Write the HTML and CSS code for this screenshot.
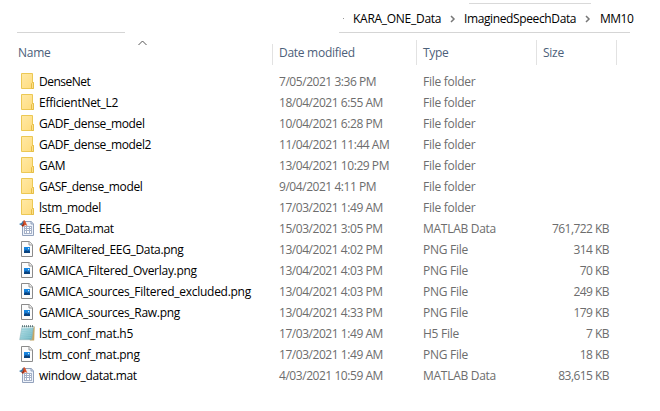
FILE: index.html
```html
<!DOCTYPE html>
<html lang="en">
<head>
<meta charset="utf-8">
<title>MM10</title>
<link rel="stylesheet" href="styles.css">
</head>
<body>
<svg class="defs" width="0" height="0" aria-hidden="true">
  <defs>
    <linearGradient id="fold" x1="0" y1="0" x2="1" y2="1"><stop offset="0" stop-color="#ffe9a6"/><stop offset="1" stop-color="#ffdc7c"/></linearGradient>
    <linearGradient id="pad" x1="0" y1="0" x2="1" y2="1"><stop offset="0" stop-color="#c4e7ee"/><stop offset="1" stop-color="#62aebb"/></linearGradient>
    <linearGradient id="sky" x1="0" y1="0" x2="0" y2="1"><stop offset="0" stop-color="#168be8"/><stop offset="1" stop-color="#1764b4"/></linearGradient>
    <symbol id="folder" viewBox="0 0 16 16">
      <path d="M2.500.5h11v9h.9v6H2.500z" fill="url(#fold)" stroke="#ecc854"/>
      <path d="M12.500 15.500V10.500l1-1h.9v6z" fill="#ffe494" stroke="#e5bd45"/>
    </symbol>
    <symbol id="png" viewBox="0 0 16 16">
      <path d="M2.500.5h7.800l3.200 3.200v11.800h-11z" fill="#fcfcfc" stroke="#8b8b8b"/>
      <path d="M10 .5v3.500h3.500" fill="#eee" stroke="#999"/>
      <path d="M5 6h6v6H5z" fill="url(#sky)"/>
      <path d="M5 10.500l2-1.500 1.500 1 1-.7L11 10.500V12H5z" fill="#0b437e"/>
      <path d="M9 7h1.200v1.200H9z" fill="#c8edff"/>
    </symbol>
    <symbol id="mat" viewBox="0 0 16 16">
      <path d="M3.500 1.500h8.700l2.300 2.300v11.700h-11z" fill="#edf2fa" stroke="#93a2bc"/>
      <path d="M12 1.500v2.500h2.500" fill="#cbd6e8" stroke="#93a2bc"/>
      <path d="M5 6h8v8H5z" fill="#a5b1c8"/>
      <path d="M6 7h1v1H6zM8 7h2v1H8zM11 7h1v1h-1zM6 9h1v1H6zM8 9h2v1H8zM11 9h1v1h-1zM6 11h1v2H6zM8 11h2v2H8zM11 11h1v2h-1z" fill="#fff"/>
      <path d="M0 4l2.300-1L5 .2 3.400 5.600 2 5.200z" fill="#397baa"/>
      <path d="M4.900 0C6.500.2 7 3.500 8.500 6L6.200 5 3.800 7 2.300 5.200 3.800 4z" fill="#d95126"/>
      <path d="M4.700.5L4.500 4 2.700 5.500l1.200.9 1.300-2.500z" fill="#772b28"/>
    </symbol>
    <symbol id="note" viewBox="0 0 16 16">
      <path d="M4 1.500h11.700L15.200 15.500H11z" fill="#c4a562"/>
      <path d="M3 1.500h11.500L12.700 14.700H.7z" fill="url(#pad)" stroke="#8fb6bb" stroke-width=".6"/>
      <path d="M2.800 4.500h10.500M2.500 6.500h10.500M2.200 8.500h10.500M1.900 10.500h10.500M1.600 12.500h10.500" stroke="#8fcbd4" stroke-width=".6"/>
      <path d="M2.500 2.200h12" stroke="#e8f2f2" stroke-width="1"/>
      <path d="M3.500.2v2M5.500.2v2M7.500.2v2M9.500.2v2M11.500.2v2M13.500.2v2" stroke="#536b70" stroke-width=".9"/>
    </symbol>
  </defs>
</svg>
<div class="window">
  <nav class="path">
    <i class="dot"></i>
    <span class="crumb kara">KARA_ONE_Data</span>
    <svg class="chev" viewBox="0 0 6 8"><path d="M1 1l3 3-3 3"/></svg>
    <span class="crumb speech">ImaginedSpeechData</span>
    <svg class="chev" viewBox="0 0 6 8"><path d="M1 1l3 3-3 3"/></svg>
    <span class="crumb current">MM10</span>
    <i class="topline"></i>
  </nav>
  <div class="rules"><i class="left"></i><i class="right"></i></div>
  <header class="row head">
    <span class="name">Name</span><span class="date">Date modified</span><span class="type">Type</span><span class="size">Size</span>
    <svg class="sort" viewBox="0 0 9 6"><path d="M.5 5l4-4 4 4"/></svg>
  </header>
  <main>
    <div class="row"><svg class="icon"><use href="#folder"/></svg><span class="name tight">DenseNet</span><span class="date">7/05/2021 3:36 PM</span><span class="type">File folder</span><span class="size"></span></div>
    <div class="row"><svg class="icon"><use href="#folder"/></svg><span class="name">EfficientNet_L2</span><span class="date">18/04/2021 6:55 AM</span><span class="type">File folder</span><span class="size"></span></div>
    <div class="row"><svg class="icon"><use href="#folder"/></svg><span class="name snug">GADF_dense_model</span><span class="date">10/04/2021 6:28 PM</span><span class="type">File folder</span><span class="size"></span></div>
    <div class="row"><svg class="icon"><use href="#folder"/></svg><span class="name snug">GADF_dense_model2</span><span class="date">11/04/2021 11:44 AM</span><span class="type">File folder</span><span class="size"></span></div>
    <div class="row"><svg class="icon"><use href="#folder"/></svg><span class="name">GAM</span><span class="date">13/04/2021 10:29 PM</span><span class="type">File folder</span><span class="size"></span></div>
    <div class="row"><svg class="icon"><use href="#folder"/></svg><span class="name snug">GASF_dense_model</span><span class="date">9/04/2021 4:11 PM</span><span class="type">File folder</span><span class="size"></span></div>
    <div class="row"><svg class="icon"><use href="#folder"/></svg><span class="name">lstm_model</span><span class="date">17/03/2021 1:49 AM</span><span class="type">File folder</span><span class="size"></span></div>
    <div class="row"><svg class="icon"><use href="#mat"/></svg><span class="name snug">EEG_Data.mat</span><span class="date">15/03/2021 3:05 PM</span><span class="type">MATLAB Data</span><span class="size">761,722 KB</span></div>
    <div class="row"><svg class="icon"><use href="#png"/></svg><span class="name snug">GAMFiltered_EEG_Data.png</span><span class="date">13/04/2021 4:02 PM</span><span class="type">PNG File</span><span class="size">314 KB</span></div>
    <div class="row"><svg class="icon"><use href="#png"/></svg><span class="name">GAMICA_Filtered_Overlay.png</span><span class="date">13/04/2021 4:03 PM</span><span class="type">PNG File</span><span class="size">70 KB</span></div>
    <div class="row"><svg class="icon"><use href="#png"/></svg><span class="name">GAMICA_sources_Filtered_excluded.png</span><span class="date">13/04/2021 4:03 PM</span><span class="type">PNG File</span><span class="size">249 KB</span></div>
    <div class="row"><svg class="icon"><use href="#png"/></svg><span class="name">GAMICA_sources_Raw.png</span><span class="date">13/04/2021 4:33 PM</span><span class="type">PNG File</span><span class="size">179 KB</span></div>
    <div class="row"><svg class="icon"><use href="#note"/></svg><span class="name">lstm_conf_mat.h5</span><span class="date">17/03/2021 1:49 AM</span><span class="type">H5 File</span><span class="size">7 KB</span></div>
    <div class="row"><svg class="icon"><use href="#png"/></svg><span class="name">lstm_conf_mat.png</span><span class="date">17/03/2021 1:49 AM</span><span class="type">PNG File</span><span class="size">18 KB</span></div>
    <div class="row"><svg class="icon"><use href="#mat"/></svg><span class="name snug">window_datat.mat</span><span class="date">4/03/2021 10:59 AM</span><span class="type">MATLAB Data</span><span class="size">83,615 KB</span></div>
  </main>
</div>
</body>
</html>
```
FILE: styles.css
```css
* { box-sizing: border-box; }
body { margin: 0; background: #fff; font-family: "Open Sans", "Noto Sans", sans-serif; font-size: 12px; line-height: 21px; color: #000; white-space: nowrap; }
.defs { position: absolute; }
.window { width: 660px; height: 411px; overflow: hidden; }
.path { position: relative; height: 32px; padding: 5px 0 0 343px; display: flex; align-items: center; }
.dot { width: 1px; height: 1px; background: #999; }
.crumb { flex: none; letter-spacing: -.28px; }
.kara { margin-left: 9px; width: 97px; }
.speech { margin-left: 8px; width: 121px; letter-spacing: -.38px; }
.current { margin-left: 9px; letter-spacing: -.5px; }
.chev { width: 6px; height: 8px; fill: none; stroke: #777; stroke-width: 1.5; flex: none; }
.topline { position: absolute; left: 469px; top: 3px; width: 122px; height: 1px; background: #d9d9d9; }
.rules { display: flex; justify-content: space-between; height: 1px; padding: 0 30px 0 17px; }
.rules i { background: #d5d5d5; height: 1px; }
.left { width: 108px; }
.right { width: 291px; }
.row { display: grid; grid-template-columns: 20px 240px 144px 120px 66px; height: 21px; padding-left: 19px; color: #6d6d6d; letter-spacing: -.28px; }
.icon { width: 16px; height: 16px; margin-top: 2px; }
.row .name { color: #000; }
.name.snug { letter-spacing: -.34px; }
.name.tight { letter-spacing: -.5px; }
main .date { letter-spacing: -.45px; }
main .size { text-align: right; letter-spacing: -.55px; }
.head { position: relative; height: 38px; padding-left: 18px; grid-template-columns: 255px 144px 120px 80px; line-height: 40px; color: #4c607a; }
.row.head .name { color: #4c607a; }
.head span { position: relative; }
.head .date, .head .type, .head .size { padding-left: 6px; }
.head span::after { content: ""; position: absolute; right: 0; top: 7px; width: 1px; height: 25px; background: #e2e2e2; }
.head .name::after { top: 11px; height: 21px; }
.sort { position: absolute; left: 138px; top: 7px; width: 9px; height: 6px; fill: none; stroke: #555; stroke-width: 1; }
```
